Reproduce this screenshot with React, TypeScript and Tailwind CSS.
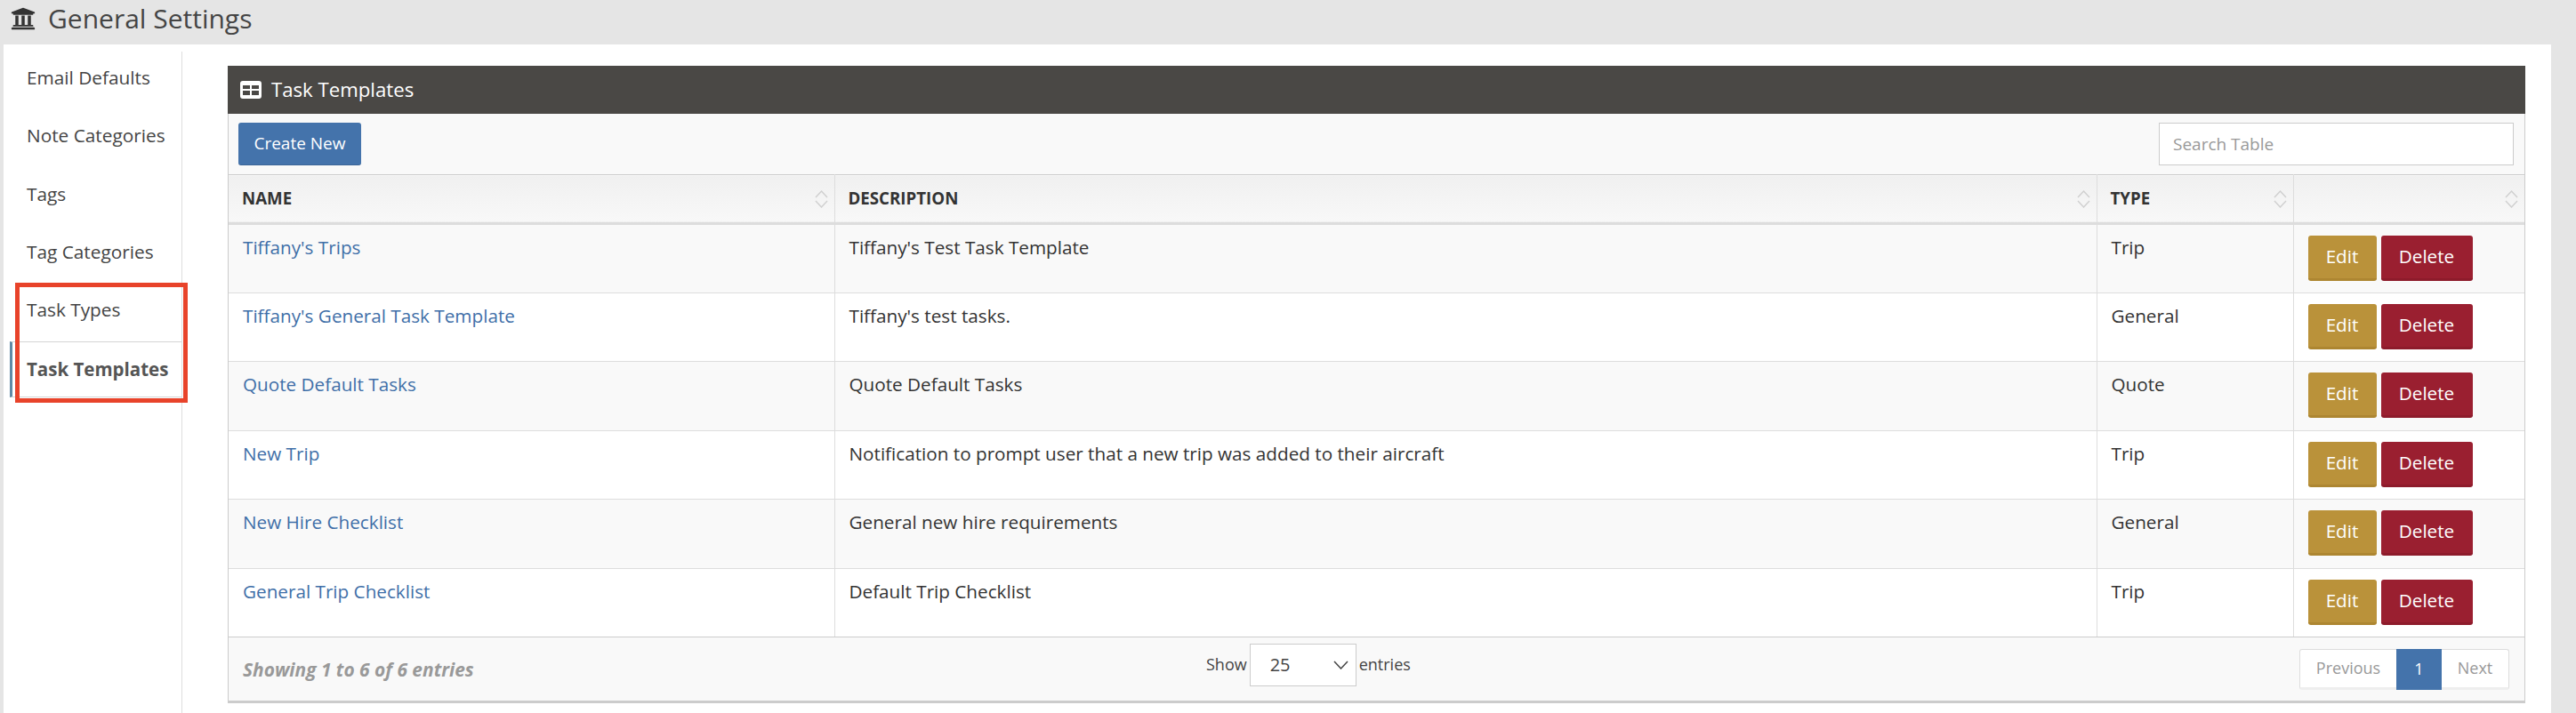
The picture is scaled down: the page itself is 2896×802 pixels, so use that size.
import { FaUniversity } from "react-icons/fa";

const rows = [
  ["Tiffany's Trips", "Tiffany's Test Task Template", "Trip"],
  ["Tiffany's General Task Template", "Tiffany's test tasks.", "General"],
  ["Quote Default Tasks", "Quote Default Tasks", "Quote"],
  ["New Trip", "Notification to prompt user that a new trip was added to their aircraft", "Trip"],
  ["New Hire Checklist", "General new hire requirements", "General"],
  ["General Trip Checklist", "Default Trip Checklist", "Trip"],
];

const nav = ["Email Defaults", "Note Categories", "Tags", "Tag Categories", "Task Types"];

function SortIcon() {
  return (
    <svg width="15" height="22" viewBox="0 0 15 22" fill="none" stroke="#d0d0d0" strokeWidth="1.5" className="shrink-0">
      <path d="M1 9 L7.5 2 L14 9" />
      <path d="M1 13 L7.5 20 L14 13" />
    </svg>
  );
}

function TableIcon() {
  return (
    <svg width="24" height="20" viewBox="0 0 24 20" className="shrink-0">
      <path
        fillRule="evenodd"
        fill="#fff"
        d="M3 0H21A3 3 0 0 1 24 3V17A3 3 0 0 1 21 20H3A3 3 0 0 1 0 17V3A3 3 0 0 1 3 0ZM3 5V9H11V5ZM13 5V9H21V5ZM3 11V16H11V11ZM13 11V16H21V11Z"
      />
    </svg>
  );
}

function Th({ label, border = true }: { label: string; border?: boolean }) {
  return (
    <th className={`p-0 font-bold text-left ${border ? "border-l border-[#dddddd]" : ""}`}>
      <div className="flex items-center justify-between pl-[15px] pr-[7px] h-[53px] text-[18.7px] text-[#333333]">
        <span>{label}</span>
        <SortIcon />
      </div>
    </th>
  );
}

export default function App() {
  return (
    <div
      className="w-[2896px] h-[802px] overflow-hidden bg-[#e5e5e5] text-[#333333] flex flex-col"
      style={{ fontFamily: '"Open Sans", sans-serif' }}
    >
      <header className="h-[50px] shrink-0 flex items-center pl-[12px] pb-[9px] gap-[14px]">
        <FaUniversity className="text-[#333333] text-[28px]" />
        <h1 className="text-[30px] font-normal leading-none text-[#444444]">General Settings</h1>
      </header>

      <div className="flex-1 flex ml-[4px] mr-[28px] bg-white">
        <aside className="w-[201px] shrink-0 mt-[8px] border-r border-[#dddddd] relative">
          <nav className="flex flex-col pl-[26px] text-[20.8px] text-[#444444]">
            {nav.map((n) => (
              <div key={n} className="h-[65.3px] pb-[6px] flex items-center">
                {n}
              </div>
            ))}
          </nav>
          <div className="ml-[7px] h-[63px] pb-[2px] border-t border-b border-[#d5d5d5] border-l-[3px] border-l-[#5f8aa5] pl-[16px] flex items-center text-[20.5px] font-bold text-[#555555]">
            Task Templates
          </div>
          <div className="absolute left-[13px] top-[260px] w-[194px] h-[135px] border-[5px] border-[#e8432a]" />
        </aside>

        <main className="flex-1 pt-[24px] pl-[51px] pr-[29px]">
          <section className="bg-[#f9f9f9] border-x border-b-[3px] border-[#cccccc]">
            <div className="h-[54px] -mx-px bg-[#4a4845] flex items-center pl-[14px] gap-[11px] text-white text-[22.2px]">
              <TableIcon />
              <span>Task Templates</span>
            </div>
            <div className="h-[68px] flex items-center justify-between pl-[11px] pr-[12px]">
              <button className="h-[48px] w-[138px] rounded-[3px] bg-[#4473ab] border-b border-[#3c6698] text-white text-[19px]">
                Create New
              </button>
              <input
                placeholder="Search Table"
                className="h-[48px] w-[399px] bg-white border border-[#cccccc] px-[15px] text-[19px] outline-none placeholder:text-[#999999]"
              />
            </div>
            <table className="w-full table-fixed border-collapse text-[20.7px]">
              <colgroup>
                <col className="w-[681px]" />
                <col className="w-[1419px]" />
                <col className="w-[221px]" />
                <col />
              </colgroup>
              <thead>
                <tr className="bg-gradient-to-b from-[#f0f0f0] to-[#f8f8f8] border-t border-[#cccccc] border-b-[3px] border-b-[#dddddd]">
                  <Th label="NAME" border={false} />
                  <Th label="DESCRIPTION" />
                  <Th label="TYPE" />
                  <Th label="" />
                </tr>
              </thead>
              <tbody>
                {rows.map((r, i) => (
                  <tr key={r[0]} className={`h-[77.5px] border-b border-[#dddddd] ${i % 2 === 0 ? "bg-[#f9f9f9]" : "bg-white"}`}>
                    <td className="align-top pl-[16px] pt-[10px] text-[#3f6fa8]">{r[0]}</td>
                    <td className="align-top pl-[16px] pt-[10px] border-l border-[#dddddd]">{r[1]}</td>
                    <td className="align-top pl-[16px] pt-[10px] border-l border-[#dddddd]">{r[2]}</td>
                    <td className="align-top pl-[16px] pt-[12px] border-l border-[#dddddd]">
                      <div className="flex gap-[5px]">
                        <button className="h-[51px] w-[77px] rounded-[3px] bg-[#ba923a] border-b-[3px] border-[#ad8631] text-white">
                          Edit
                        </button>
                        <button className="h-[51px] w-[103px] rounded-[3px] bg-[#9a1f30] border-b-[3px] border-[#8d1b2b] text-white">
                          Delete
                        </button>
                      </div>
                    </td>
                  </tr>
                ))}
              </tbody>
            </table>
            <footer className="h-[72px] flex items-center border-t border-[#cccccc] -mt-px pl-[16px] pr-[17px]">
              <div className="w-[1083px] text-[20.9px] font-bold italic text-[#999999] pt-[2px]">Showing 1 to 6 of 6 entries</div>
              <div className="flex items-center gap-[3px] text-[18px] text-[#444444] -mt-[10px]">
                <span>Show</span>
                <div className="h-[48px] w-[120px] bg-white border border-[#cccccc] flex items-center justify-between pl-[22px] pr-[8px] text-[20px]">
                  <span>25</span>
                  <svg width="17" height="10" viewBox="0 0 17 10" fill="none" stroke="#444444" strokeWidth="1.5">
                    <path d="M1 1 L8.5 9 L16 1" />
                  </svg>
                </div>
                <span>entries</span>
              </div>
              <div className="ml-auto flex h-[46px] text-[18px] rounded-[3px] border border-[#dddddd] border-b-[3px] border-b-[#eeeeee] bg-white text-[#999999]">
                <span className="w-[108px] flex items-center justify-center">Previous</span>
                <span className="w-[51px] -mt-px -mb-[3px] bg-[#4473ab] text-white flex items-center justify-center">1</span>
                <span className="w-[75px] flex items-center justify-center">Next</span>
              </div>
            </footer>
          </section>
        </main>
      </div>
    </div>
  );
}
